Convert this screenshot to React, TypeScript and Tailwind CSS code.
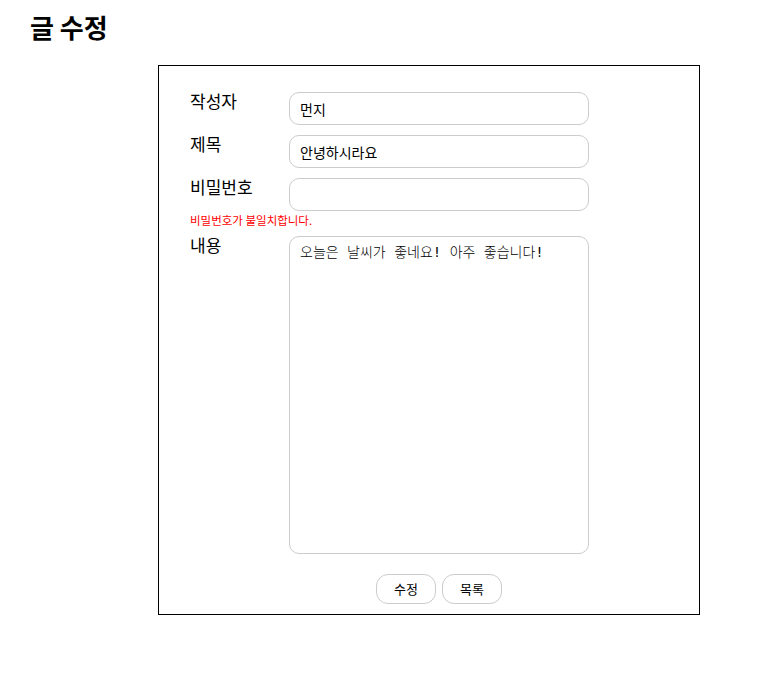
import React from "react";

const FONT = { fontFamily: '"Noto Sans CJK KR", "Noto Sans", sans-serif' };

const FIELDS = [
  { label: "작성자", value: "먼지" },
  { label: "제목", value: "안녕하시라요" },
  { label: "비밀번호", value: "" },
];

const App = () => {
  return (
    <div className="w-[766px] h-[687px] bg-white text-black" style={FONT}>
      <h1 className="pl-[30px] pt-[10px] h-[65px] text-[26px] leading-[34px] font-bold">
        글 수정
      </h1>

      <div className="ml-[158px] w-[542px] h-[550px] border border-black pt-[26px] pl-[31px] flex flex-col">
        {FIELDS.map((field, i) => (
          <div key={field.label} className={i > 0 ? "mt-[10px]" : ""}>
            <div className="flex items-start">
              <label className="w-[99px] text-[17px] leading-[20px] -mt-[1px]">
                {field.label}
              </label>
              <input
                type={field.label === "비밀번호" ? "password" : "text"}
                defaultValue={field.value}
                className="w-[300px] h-[33px] border border-[#cccccc] rounded-[10px] px-[10px] text-[14px] outline-none"
              />
            </div>
          </div>
        ))}

        <p className="mt-[2px] h-[23px] text-[11.5px] leading-[14px] text-[#ff0000]">
          비밀번호가 불일치합니다.
        </p>

        <div className="flex items-start">
          <label className="w-[99px] text-[17px] leading-[20px] -mt-[1px]">
            내용
          </label>
          <textarea
            defaultValue="오늘은 날씨가 좋네요! 아주 좋습니다!"
            className="w-[300px] h-[318px] border border-[#cccccc] rounded-[10px] px-[10px] py-[6px] text-[14px] leading-[18px] font-light resize-none outline-none"
            style={{ fontFamily: '"DejaVu Sans Mono", "Noto Sans CJK KR", monospace' }}
          />
        </div>

        <div className="mt-[20px] ml-[99px] w-[300px] flex justify-center gap-[6px]">
          <button className="w-[60px] h-[30px] border border-[#cccccc] rounded-[12px] text-[13px] bg-white">
            수정
          </button>
          <button className="w-[60px] h-[30px] border border-[#cccccc] rounded-[12px] text-[13px] bg-white">
            목록
          </button>
        </div>
      </div>
    </div>
  );
};

export default App;
